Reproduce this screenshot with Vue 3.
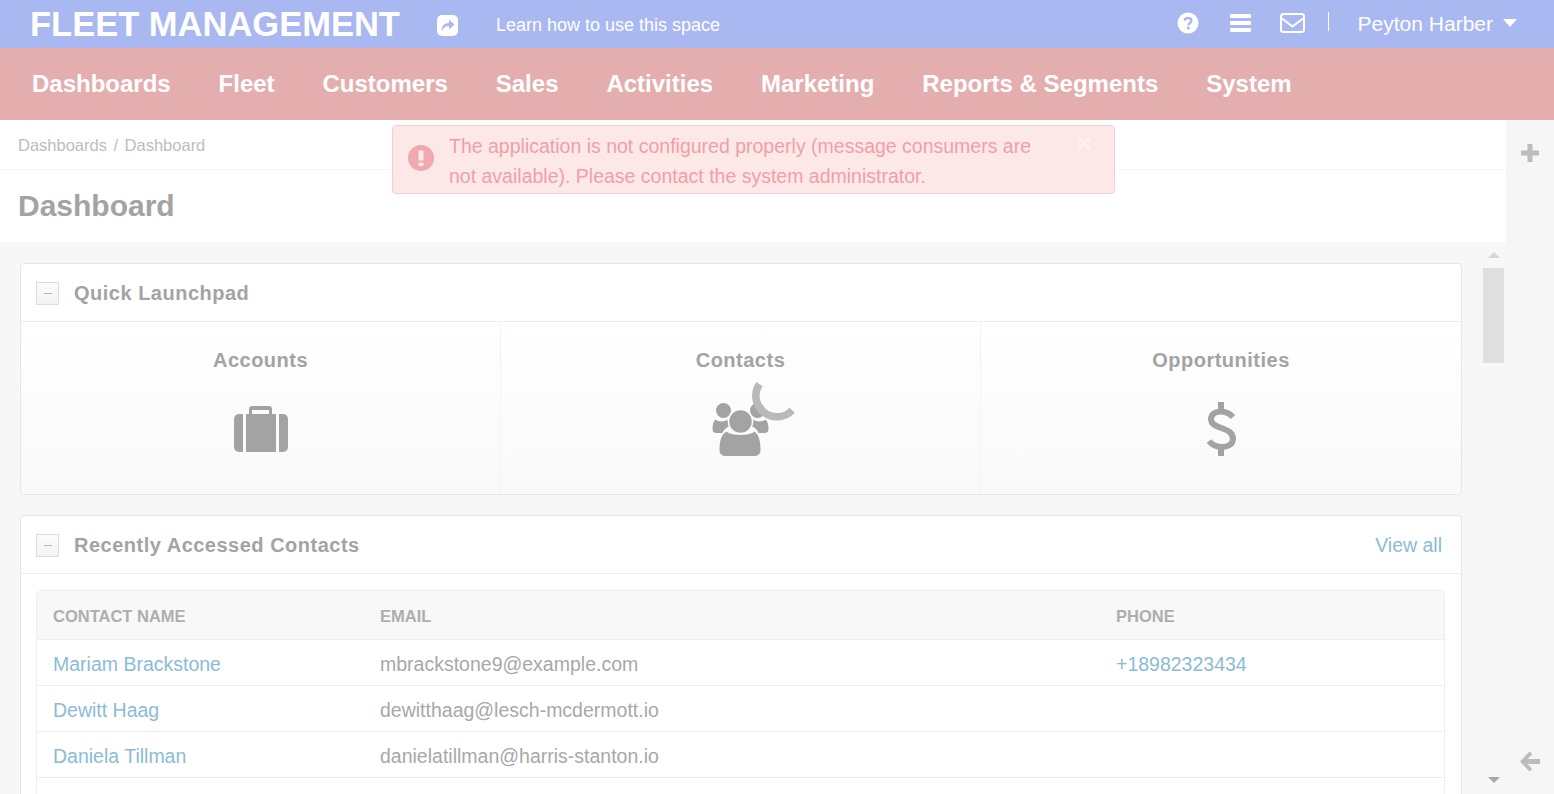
<template>
  <div class="page">
    <header class="topbar">
      <div class="brand">FLEET MANAGEMENT</div>
      <svg class="share" width="21" height="21" viewBox="0 0 21 21">
        <rect width="21" height="21" rx="5" fill="#fff" />
        <path d="M5 16.500C4 11.500 7 8 12 8V4.500l5.500 5-5.500 5V11c-3.500 0-5.800 1.500-7 5.500z" fill="#a9b8f0" />
      </svg>
      <a class="learn">Learn how to use this space</a>
      <div class="top-right">
        <svg width="22" height="22" viewBox="0 0 22 22">
          <circle cx="11" cy="11" r="10.500" fill="#fff" />
          <path d="M7.600 8.600C7.900 6.800 9.200 6 11 6c2 0 3.400 1.100 3.400 2.800 0 2.500-3 2.400-3 4.400" fill="none" stroke="#a9b8f0" stroke-width="2.400" />
          <rect x="10" y="14.600" width="2.700" height="2.700" fill="#a9b8f0" />
        </svg>
        <svg class="bars" width="22" height="20" viewBox="0 0 22 20">
          <rect y="1" width="21" height="4" rx="1" fill="#fff" />
          <rect y="8" width="21" height="4" rx="1" fill="#fff" />
          <rect y="15" width="21" height="4" rx="1" fill="#fff" />
        </svg>
        <svg class="mail" width="26" height="20" viewBox="0 0 26 20">
          <rect x="1" y="1" width="23" height="18" rx="2.500" fill="none" stroke="#fff" stroke-width="2" />
          <path d="M2 5.500l10.500 8 10.500-8" fill="none" stroke="#fff" stroke-width="2" />
        </svg>
        <span class="divider"></span>
        <span class="user">Peyton Harber</span>
        <span class="caret"></span>
      </div>
    </header>

    <nav class="nav">
      <a v-for="item in navItems" :key="item">{{ item }}</a>
    </nav>

    <div class="body">
      <div class="main">
        <div class="breadcrumb">Dashboards<span class="sep">/</span>Dashboard</div>
        <h1 class="title">Dashboard</h1>

        <div class="content">
          <div class="scroll-area">
            <section class="card launchpad">
              <div class="card-head">
                <span class="toggle"></span>
                <h2>Quick Launchpad</h2>
              </div>
              <div class="launch-row">
                <div class="launch-cell">
                  <h3>Accounts</h3>
                  <div class="launch-icon">
                    <svg width="54" height="46" viewBox="0 0 54 46">
                      <path d="M15 8V3a3 3 0 0 1 3-3h17a3 3 0 0 1 3 3v5h-3V4H18v4z" fill="#a3a3a3" />
                      <path d="M9 8v38H5a5 5 0 0 1-5-5V13a5 5 0 0 1 5-5z" fill="#a3a3a3" />
                      <rect x="12" y="8" width="30" height="38" fill="#a3a3a3" />
                      <path d="M45 8v38h4a5 5 0 0 0 5-5V13a5 5 0 0 0-5-5z" fill="#a3a3a3" />
                    </svg>
                  </div>
                </div>
                <div class="launch-cell">
                  <h3>Contacts</h3>
                  <div class="launch-icon">
                    <svg width="57" height="53" viewBox="-0.500 0 57 53">
                      <circle cx="11" cy="7.500" r="7.500" fill="#a3a3a3" />
                      <circle cx="45" cy="7.500" r="7.500" fill="#a3a3a3" />
                      <path d="M3 16.500C5 19 13 19 15 16.500C15.500 19 16 22 17 23C13 25 11 27 10 30H4C1.500 30 0 28.500 0 26C0 22 1 18 3 16.500z" fill="#a3a3a3" />
                      <path d="M53 16.500C51 19 43 19 41 16.500C40.500 19 40 22 39 23C43 25 45 27 46 30H52C54.500 30 56 28.500 56 26C56 22 55 18 53 16.500z" fill="#a3a3a3" />
                      <path d="M14 28.500C18 33 38 33 42 28.500C46 31 48 38 48 47C48 51 45 53 42 53H13C10 53 7 51 7 47C7 38 9 31 14 28.500z" fill="#a3a3a3" />
                      <circle cx="28" cy="18.500" r="12" fill="#a3a3a3" stroke="#fdfdfd" stroke-width="1.500" />
                    </svg>
                  </div>
                </div>
                <div class="launch-cell">
                  <h3>Opportunities</h3>
                  <div class="launch-icon">
                    <svg width="29" height="54" viewBox="0 0 29 54">
                      <path d="M11 0h6v8h-6zM11 46h6v8h-6z" fill="#a3a3a3" />
                      <path d="M26 15C22 11 18 9.500 14 9.500C8 9.500 4 12.500 4 17C4 28 26 24 26 37C26 42 21 45 15 45C10 45 5 43 2 39" fill="none" stroke="#a3a3a3" stroke-width="6" />
                    </svg>
                  </div>
                </div>
              </div>
            </section>

            <section class="card recent">
              <div class="card-head">
                <span class="toggle"></span>
                <h2>Recently Accessed Contacts</h2>
                <a class="view-all">View all</a>
              </div>
              <div class="table-wrap">
                <table>
                  <thead>
                    <tr>
                      <th class="col-name">Contact name</th>
                      <th class="col-email">Email</th>
                      <th>Phone</th>
                    </tr>
                  </thead>
                  <tbody>
                    <tr v-for="c in contacts" :key="c.email">
                      <td><a>{{ c.name }}</a></td>
                      <td>{{ c.email }}</td>
                      <td><a>{{ c.phone }}</a></td>
                    </tr>
                  </tbody>
                </table>
              </div>
            </section>
          </div>

          <div class="scrollbar">
            <span class="arrow up"></span>
            <span class="thumb"></span>
            <span class="arrow down"></span>
          </div>
        </div>
      </div>

      <aside class="sidebar">
        <svg width="20" height="20" viewBox="0 0 20 20">
          <path d="M7.500 1h5v6.500H19v5h-6.500V19h-5v-6.500H1v-5h6.500z" fill="#bcbcbc" />
        </svg>
        <svg width="20" height="21" viewBox="0 0 20 21">
          <path d="M9.500.500l2.800 2.800L7.500 8H20v5H7.500l4.800 4.700-2.800 2.800L0 10.500z" fill="#bcbcbc" />
        </svg>
      </aside>

      <div class="alert">
        <svg width="26" height="26" viewBox="0 0 26 26">
          <circle cx="13" cy="13" r="13" fill="#eeaaae" />
          <rect x="10.500" y="5.500" width="5" height="10" rx="1" fill="#fde8e8" />
          <rect x="10.500" y="17.500" width="5" height="3.500" rx="1" fill="#fde8e8" />
        </svg>
        <p>The application is not configured properly (message consumers are not available). Please contact the system administrator.</p>
        <span class="close">×</span>
      </div>

      <svg class="spinner" width="50" height="50" viewBox="0 0 50 50">
        <path d="M7.400 11.200A21 21 0 0 0 40.200 37.200" fill="none" stroke="#b9b9b9" stroke-width="7.500" />
      </svg>
    </div>
  </div>
</template>

<script setup>
const navItems = ['Dashboards', 'Fleet', 'Customers', 'Sales', 'Activities', 'Marketing', 'Reports & Segments', 'System']

const contacts = [
  { name: 'Mariam Brackstone', email: 'mbrackstone9@example.com', phone: '+18982323434' },
  { name: 'Dewitt Haag', email: 'dewitthaag@lesch-mcdermott.io', phone: '' },
  { name: 'Daniela Tillman', email: 'danielatillman@harris-stanton.io', phone: '' },
  { name: '', email: '', phone: '' }
]
</script>

<style>
html,
body {
  margin: 0;
  overflow: hidden;
}
</style>

<style scoped>
.page {
  height: 794px;
  overflow: hidden;
  display: flex;
  flex-direction: column;
  font-family: "Liberation Sans", Arial, sans-serif;
  background: #f7f7f7;
}

.topbar {
  height: 48px;
  flex: none;
  display: flex;
  align-items: center;
  background: #a9b8f0;
  color: #fff;
  padding: 0 37px 0 30px;
}

.brand {
  font-size: 34.500px;
  font-weight: 700;
  margin-right: 37px;
}

.share {
  margin-top: 2px;
}

.learn {
  font-size: 18px;
  margin-left: 38px;
  margin-top: 2px;
}

.top-right {
  margin-left: auto;
  display: flex;
  align-items: center;
}

.top-right svg {
  margin-bottom: 3px;
}

.bars {
  margin-left: 31px;
}

.mail {
  margin-left: 28px;
}

.divider {
  width: 1px;
  height: 19px;
  background: #fff;
  margin: 0 29px 5px 22px;
}

.user {
  font-size: 21px;
}

.caret {
  width: 0;
  height: 0;
  margin-left: 10px;
  margin-bottom: 2px;
  border-left: 7.500px solid transparent;
  border-right: 7.500px solid transparent;
  border-top: 8px solid #fff;
}

.nav {
  height: 72px;
  flex: none;
  display: flex;
  align-items: center;
  gap: 47.900px;
  padding-left: 32px;
  background: #e5aeae;
  color: #fff;
  font-size: 24px;
  font-weight: 700;
}

.body {
  flex: 1;
  min-height: 0;
  display: flex;
  position: relative;
}

.main {
  flex: 1;
  min-width: 0;
  display: flex;
  flex-direction: column;
}

.breadcrumb {
  height: 50px;
  box-sizing: border-box;
  flex: none;
  display: flex;
  align-items: center;
  padding: 2px 0 0 18px;
  background: #fff;
  color: #bdbdbd;
  font-size: 16.500px;
  border-bottom: 1px solid #f7f7f7;
}

.sep {
  margin: 0 6.500px;
}

.title {
  height: 72px;
  flex: none;
  box-sizing: border-box;
  margin: 0;
  padding: 18px 0 0 18px;
  background: #fff;
  color: #a3a3a3;
  font-size: 30px;
  font-weight: 700;
  line-height: 36px;
}

.content {
  flex: 1;
  min-height: 0;
  display: flex;
}

.scroll-area {
  width: 1442px;
  margin-left: 20px;
  padding-top: 21px;
}

.card {
  box-sizing: border-box;
  background: #fff;
  border: 1px solid #e6e6e6;
  border-radius: 4px;
}

.launchpad {
  height: 232px;
  display: flex;
  flex-direction: column;
}

.recent {
  margin-top: 20px;
  padding-bottom: 40px;
}

.card-head {
  height: 58px;
  flex: none;
  box-sizing: border-box;
  display: flex;
  align-items: center;
  padding: 2px 19px 0 15px;
  border-bottom: 1px solid #eeeeee;
}

.card-head h2 {
  margin: 0 0 0 15px;
  color: #a3a3a3;
  font-size: 20px;
  font-weight: 700;
  letter-spacing: 0.5px;
}

.toggle {
  position: relative;
  width: 23px;
  height: 23px;
  box-sizing: border-box;
  border: 1px solid #dddddd;
  background: linear-gradient(#fbfbfb, #f3f3f3);
}

.toggle::after {
  content: "";
  position: absolute;
  left: 7px;
  top: 10px;
  width: 8px;
  height: 1px;
  background: #b5b5b5;
}

.view-all {
  margin-left: auto;
  color: #8bbcd3;
  font-size: 19.500px;
}

.launch-row {
  flex: 1;
  display: grid;
  grid-template-columns: 479px 480px 1fr;
  background: linear-gradient(#ffffff, #f9f9f9);
  border-radius: 0 0 4px 4px;
}

.launch-cell {
  display: flex;
  flex-direction: column;
  align-items: center;
  padding-top: 26px;
  border-left: 1px solid #f3f3f3;
}

.launch-cell:first-child {
  border-left: 0;
}

.launch-cell h3 {
  margin: 0;
  height: 54px;
  color: #a3a3a3;
  font-size: 20px;
  font-weight: 700;
  line-height: 24px;
  letter-spacing: 0.5px;
}

.launch-icon {
  height: 54px;
  display: flex;
  align-items: center;
}

.table-wrap {
  margin: 16px 16px 0 15px;
  border: 1px solid #eeeeee;
  border-bottom: 0;
  border-radius: 6px 6px 0 0;
  overflow: hidden;
}

table {
  width: 100%;
  table-layout: fixed;
  border-collapse: collapse;
  font-size: 19.500px;
  color: #a8a8a8;
}

.col-name {
  width: 328px;
}

.col-email {
  width: 735px;
}

th {
  height: 48px;
  padding: 4px 15px 0;
  box-sizing: border-box;
  background: #f8f8f8;
  color: #aeaeae;
  font-size: 16.500px;
  font-weight: 700;
  text-align: left;
  text-transform: uppercase;
}

td {
  height: 46px;
  padding: 4px 15px 0;
  box-sizing: border-box;
  border-top: 1px solid #eeeeee;
  white-space: nowrap;
}

th:not(.col-email),
td:not(:nth-child(2)) {
  padding-left: 16px;
}

td a {
  color: #8bbcd3;
}

.scrollbar {
  width: 21px;
  margin-left: 21px;
  padding-top: 10px;
  display: flex;
  flex-direction: column;
  align-items: center;
}

.arrow {
  width: 0;
  height: 0;
  border-left: 6px solid transparent;
  border-right: 6px solid transparent;
}

.up {
  border-bottom: 6px solid #d6d6d6;
}

.thumb {
  width: 21px;
  height: 95px;
  margin-top: 10px;
  background: #dfdfdf;
}

.down {
  margin-top: auto;
  margin-bottom: 11px;
  border-top: 6px solid #a8a8a8;
}

.sidebar {
  width: 48px;
  flex: none;
  box-sizing: border-box;
  display: flex;
  flex-direction: column;
  align-items: center;
  justify-content: space-between;
  padding: 23px 0 22px;
  background: #f6f6f6;
}

.alert {
  position: absolute;
  left: 392px;
  top: 5px;
  width: 723px;
  height: 69px;
  box-sizing: border-box;
  display: flex;
  align-items: center;
  padding: 2px 70px 0 15px;
  background: #fde8e8;
  border: 1px solid #f9cdcd;
  border-radius: 4px;
  color: #f0a0a5;
  font-size: 19.500px;
  line-height: 30px;
}

.alert svg {
  flex: none;
  margin-top: -5px;
}

.alert p {
  margin: 0 0 0 15px;
}

.close {
  position: absolute;
  right: 22px;
  top: 2px;
  color: #fbf3f3;
  font-size: 26px;
  line-height: 30px;
  font-weight: 700;
}

.spinner {
  position: absolute;
  left: 752px;
  top: 253px;
}
</style>
